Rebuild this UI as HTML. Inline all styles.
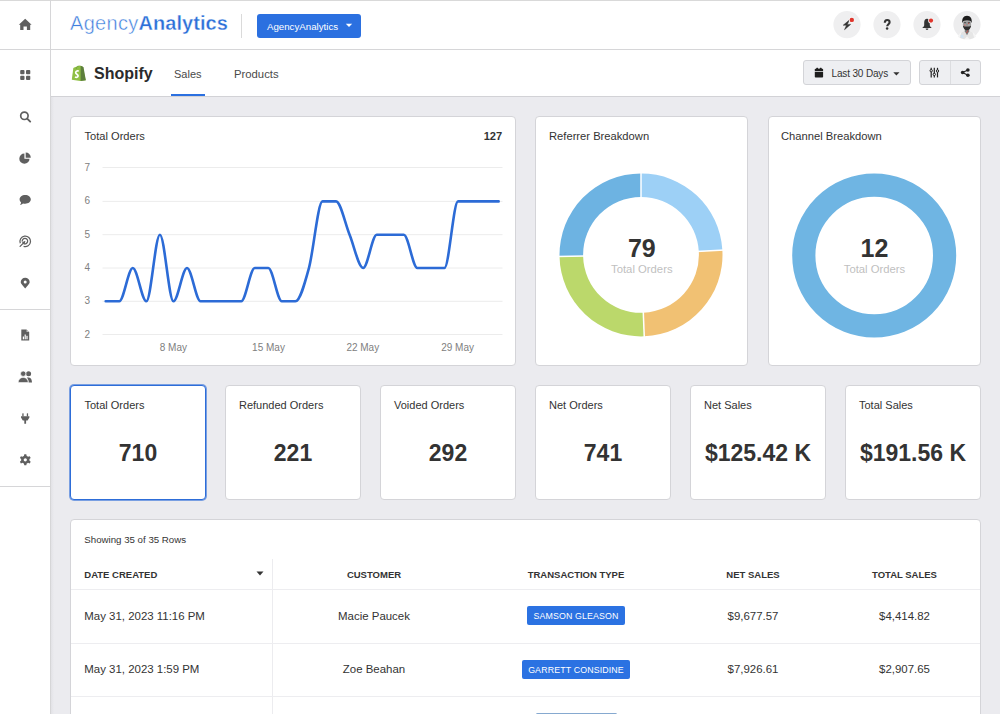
<!DOCTYPE html>
<html><head><meta charset="utf-8">
<style>
*{box-sizing:border-box;margin:0;padding:0}
html,body{width:1000px;height:714px;overflow:hidden}
body{background:#ebebef;font-family:"Liberation Sans",sans-serif;color:#333;position:relative}
.abs{position:absolute}
#topline{position:absolute;left:0;top:0;width:1000px;height:1px;background:#d9d9d9}
#sidebar{position:absolute;left:0;top:1px;width:50px;height:713px;background:#fff}
#sbborder{position:absolute;left:50px;top:0;width:1px;height:714px;background:#d6d6d8}
#sbshadow{position:absolute;left:51px;top:97px;width:3px;height:617px;background:linear-gradient(to right,#e2e2e6,#ebebef)}
#header{position:absolute;left:51px;top:1px;width:949px;height:48px;background:#fff}
#hline{position:absolute;left:0;top:49px;width:1000px;height:1px;background:#d6d6d8}
#subnav{position:absolute;left:51px;top:50px;width:949px;height:46px;background:#fff}
#snline{position:absolute;left:51px;top:96px;width:949px;height:1px;background:#d2d2d6}
.sbl{position:absolute;left:0;width:50px;height:1px;background:#d6d6d8}
.ico{position:absolute}
.card{position:absolute;background:#fff;border:1px solid #d4d4d8;border-radius:4px}
.t11{font-size:11px;color:#333;position:absolute;white-space:nowrap;line-height:1}
.kpi .lbl{position:absolute;left:13px;top:13.2px;font-size:11px;color:#333;white-space:nowrap;line-height:13px}
.kpi .val{position:absolute;left:0;right:0;top:54px;text-align:center;font-size:23px;font-weight:700;color:#333;line-height:26px;white-space:nowrap}
.th{position:absolute;font-size:9.5px;font-weight:700;color:#333;white-space:nowrap;line-height:1;letter-spacing:0}
.td{position:absolute;font-size:11.45px;color:#333;white-space:nowrap;line-height:1}
.badge{position:absolute;height:19px;background:#2b72e2;border-radius:2px;color:#fff;font-size:8.8px;letter-spacing:0.15px;text-align:center;line-height:20.5px;white-space:nowrap}
.rl{position:absolute;left:1px;width:909px;height:1px;background:#ededf0}
</style></head>
<body>
<div id="topline"></div>
<div id="sidebar"></div>
<div id="header"></div>
<div id="subnav"></div>
<div id="hline"></div>
<div id="snline"></div>
<div id="sbborder"></div>
<div id="sbshadow"></div>
<div class="sbl" style="top:309px"></div>
<div class="sbl" style="top:486px"></div>

<!-- HEADER -->
<div class="abs" style="left:70px;top:11px;font-size:20px;line-height:24px;white-space:nowrap;letter-spacing:-0.05px;transform:scaleY(1.05);transform-origin:0 18px"><span style="color:#3f80dd;-webkit-text-stroke:0.45px #fff;letter-spacing:0.3px">Agency</span><span style="color:#2c6fd8;font-weight:700;-webkit-text-stroke:0.35px #fff;letter-spacing:0.05px">Analytics</span></div>
<div class="abs" style="left:241px;top:14px;width:1px;height:24px;background:#dadada"></div>
<div class="abs" style="left:257px;top:14px;width:104px;height:24px;background:#2b70e0;border-radius:3px;color:#fff;font-size:9.7px;line-height:25px;padding-left:10px;white-space:nowrap">AgencyAnalytics</div>

<!-- ICONS -->
<svg class="abs" style="left:0;top:0" width="1000" height="100" viewBox="0 0 1000 100">
<g fill="#5f5f5f">
<path d="M25.2,18.8L31.6,24.7H30.2V29.9H26.9V26.6H23.5V29.9H20.2V24.7H18.8Z"/>
<rect x="20.2" y="70" width="4.3" height="4.3" rx="1"/><rect x="26" y="70" width="4.3" height="4.3" rx="1"/>
<rect x="20.2" y="75.8" width="4.3" height="4.3" rx="1"/><rect x="26" y="75.8" width="4.3" height="4.3" rx="1"/>
</g>
<circle cx="847" cy="24.6" r="13.6" fill="#efeff0"/>
<circle cx="887" cy="24.6" r="13.6" fill="#efeff0"/>
<circle cx="927" cy="24.6" r="13.6" fill="#efeff0"/>
<circle cx="967" cy="24.6" r="13.6" fill="#ededee"/>
<path d="M849.3,20.1L843.2,25.2H846.5L844.5,29.7L850.6,24.4H847.3Z" fill="#333" stroke="#333" stroke-width="0.5" stroke-linejoin="round"/>
<circle cx="851.8" cy="19.9" r="3" fill="#f4f4f4"/>
<circle cx="851.8" cy="19.9" r="2.2" fill="#e0352b"/>
<path d="M884.8,22.8C884.8,21 885.9,20 887.2,20C888.6,20 889.6,20.9 889.6,22.2C889.6,24.1 887.2,24.3 887.2,26.2" fill="none" stroke="#333" stroke-width="2.1"/>
<circle cx="887.1" cy="28.4" r="1.25" fill="#333"/>
<path d="M927,18.8C925.2,18.8 924.2,20.4 924.2,22.6V25.3C924.2,26.5 923.1,27.2 922.1,28.1H931.9C930.9,27.2 929.8,26.5 929.8,25.3V22.6C929.8,20.4 928.8,18.8 927,18.8Z" fill="#333"/>
<path d="M925.6,28.6H928.4A1.4,1.4 0 0 1 925.6,28.6Z" fill="#333"/>
<circle cx="931" cy="20.6" r="2.9" fill="#f2f2f2"/>
<circle cx="931" cy="20.6" r="2.1" fill="#e0352b"/>
<g>
<path d="M957.8,36.8C958.8,33.2 961.5,31.4 965,30.8H969C972.5,31.4 975.2,33.2 976.2,36.8C973.5,38.8 970.5,39.6 967,39.6C963.5,39.6 960.5,38.8 957.8,36.8Z" fill="#f5f5f5"/>
<path d="M961.5,32.2C962.5,31.6 963.8,31.1 965,30.9L967,36.5L964.2,39.2C962.5,38.9 961,38.4 959.8,37.8Z" fill="#e2e2e2"/>
<path d="M972.5,32.2C971.5,31.6 970.2,31.1 969,30.9L967,36.5L969.8,39.2C971.5,38.9 973,38.4 974.2,37.8Z" fill="#e6e6e6"/>
<path d="M960.5,35.5L962.8,34.5L963.8,37.5L961.5,38Z" fill="#cfe3f5"/>
<path d="M964.8,28.2H969.2V31.2L967,35.5L964.8,31.2Z" fill="#7a7a7a"/>
<ellipse cx="967" cy="24.3" rx="4.1" ry="5" fill="#a4a4a4"/>
<path d="M962.9,25.4C963.3,28.5 964.8,30.2 967,30.2C969.2,30.2 970.7,28.5 971.1,25.4C970,26.4 968.8,26.6 967,26.6C965.2,26.6 964,26.4 962.9,25.4Z" fill="#2e2e2e"/>
<path d="M962.3,23.2C961.8,18.6 963.4,15.8 967,15.8C970.6,15.8 972.2,18.6 971.7,23.2C971.1,21.3 970.3,20.3 967,20.2C963.7,20.3 962.9,21.3 962.3,23.2Z" fill="#1c1c1c"/>
<rect x="963.9" y="22.3" width="2.3" height="0.9" fill="#3a3a3a"/><rect x="967.8" y="22.3" width="2.3" height="0.9" fill="#3a3a3a"/>
<rect x="966.6" y="23.5" width="0.8" height="2.2" fill="#777"/>
<circle cx="968.6" cy="23.3" r="0.55" fill="#e0352b"/><circle cx="964.9" cy="25.1" r="0.55" fill="#e0352b"/><circle cx="967.6" cy="31" r="0.6" fill="#e0352b"/><circle cx="966.8" cy="32.6" r="0.5" fill="#e0352b"/>
</g>
</svg>
<!-- SIDEBAR ICONS -->
<svg class="abs" style="left:0;top:100px" width="50" height="380" viewBox="0 100 50 380">
<g fill="#5f5f5f">
<circle cx="24.4" cy="115.8" r="3.7" fill="none" stroke="#5f5f5f" stroke-width="1.7"/>
<path d="M27.2,118.6L30.2,121.6" stroke="#5f5f5f" stroke-width="1.9" stroke-linecap="round"/>
<path d="M24.4,153.6A5.1,5.1 0 1 0 29.5,158.7H24.4Z"/>
<path d="M25.7,152.6A5.1,5.1 0 0 1 30.8,157.7H25.7Z"/>
<path d="M25.2,194.9C28.4,194.9 30.8,196.8 30.8,199.3C30.8,201.8 28.4,203.7 25.2,203.7C24.4,203.7 23.7,203.6 23,203.4C22.2,204.2 21.1,204.8 19.9,204.9C20.6,204.1 21,203.4 21.1,202.5C20.1,201.7 19.6,200.6 19.6,199.3C19.6,196.8 22,194.9 25.2,194.9Z"/>
<path d="M23.6,246.4A5.3,5.3 0 1 0 20.3,243.3" fill="none" stroke="#5f5f5f" stroke-width="1.25"/>
<path d="M23.8,243.6A2.7,2.7 0 1 0 22.3,241.7" fill="none" stroke="#5f5f5f" stroke-width="1.25"/>
<path d="M24.6,241.9L20.1,246.4" stroke="#5f5f5f" stroke-width="1.3" stroke-linecap="round"/>
<path d="M25.4,241.1L21.9,242.3L24.2,244.6Z"/>
<path d="M25.2,288.4C23.4,286 20.7,283.8 20.7,282.2A4.5,4.5 0 0 1 29.7,282.2C29.7,283.8 27,286 25.2,288.4Z"/>
<circle cx="25.2" cy="282" r="1.5" fill="#fff"/>
<path d="M21.3,329.4H26.5L29.2,332.1V340.6H21.3Z"/>
<path d="M26.5,329.4V332.1H29.2Z" fill="#fff" opacity="0.6"/>
<rect x="22.8" y="336.5" width="1.2" height="2.8" fill="#fff"/><rect x="24.6" y="334.5" width="1.2" height="4.8" fill="#fff"/><rect x="26.4" y="335.8" width="1.2" height="3.5" fill="#fff"/>
<circle cx="28.6" cy="373.7" r="2.5"/>
<path d="M26.8,377.6C27.3,377.5 28.1,377.5 28.9,377.5C31,377.5 32,380 32,382.6H28.6C28.6,380.5 28,378.8 26.8,377.6Z"/>
<circle cx="23.2" cy="373.7" r="2.7" stroke="#fff" stroke-width="0.7"/>
<path d="M18.2,382.6C18.2,379.5 20.3,377.4 23.2,377.4C26.1,377.4 28.2,379.5 28.2,382.6Z" stroke="#fff" stroke-width="0.6"/>
<rect x="22.3" y="413.2" width="1.3" height="3.2" rx="0.5"/><rect x="26.8" y="413.2" width="1.3" height="3.2" rx="0.5"/>
<path d="M21,416.2H29.4V417.6L27.6,420.6H26.1V423.8H24.3V420.6H22.8L21,417.6Z"/>
<path d="M24.3,454.3H26.3L26.7,456A3.8,3.8 0 0 1 28,456.8L29.7,456.2L30.7,457.9L29.4,459.1A3.8,3.8 0 0 1 29.4,460.6L30.7,461.7L29.7,463.4L28,462.8A3.8,3.8 0 0 1 26.7,463.6L26.3,465.2H24.3L23.9,463.6A3.8,3.8 0 0 1 22.6,462.8L20.9,463.4L19.9,461.7L21.2,460.6A3.8,3.8 0 0 1 21.2,459.1L19.9,457.9L20.9,456.2L22.6,456.8A3.8,3.8 0 0 1 23.9,456Z"/>
<circle cx="25.3" cy="459.8" r="1.6" fill="#fff"/>
</g>
</svg>
<!-- SHOPIFY LOGO -->
<svg class="abs" style="left:70px;top:64px" width="18" height="18" viewBox="0 0 18 18">
<path d="M4.2,3.4L9.6,1.5L12.5,2.4L15.8,16.2L10.3,17L1.8,15.8L3.3,4Z" fill="#8fbf45"/>
<path d="M10.6,1.8L12.5,2.4L13.6,3.6L15.8,16.2L10.6,17Z" fill="#5d7f3c"/>
<path d="M6.2,4.9C6.6,3 7.7,1.8 8.6,2.1" fill="none" stroke="#6a9a3a" stroke-width="0.8"/>
<path d="M8.7,7.2C7.9,6.7 5.9,6.8 5.7,8.5C5.5,10.3 8.2,10.3 8.1,12C8,13.4 6.4,13.6 5,12.9" fill="none" stroke="#fff" stroke-width="1.7"/>
</svg>
<!-- DATE BUTTON -->
<div class="abs" style="left:803px;top:60px;width:108px;height:25px;background:#eeeff2;border:1px solid #d3d4d8;border-radius:3px"></div>
<svg class="abs" style="left:814px;top:67px" width="10" height="11" viewBox="0 0 10 11">
<path d="M0.8,2.6Q0.8,1.8 1.6,1.8H8.3Q9.1,1.8 9.1,2.6V4.2H0.8Z" fill="#1e1e1e"/>
<path d="M0.8,5H9.1V9.8Q9.1,10.5 8.3,10.5H1.6Q0.8,10.5 0.8,9.8Z" fill="#1e1e1e"/>
<rect x="2.2" y="0.8" width="2" height="2.2" rx="0.6" fill="#1e1e1e"/><rect x="5.7" y="0.8" width="2" height="2.2" rx="0.6" fill="#1e1e1e"/>
</svg>
<div class="abs" style="left:831.5px;top:68.1px;font-size:10px;letter-spacing:-0.15px;color:#333;line-height:12px;white-space:nowrap">Last 30 Days</div>
<svg class="abs" style="left:893px;top:72px" width="7" height="4" viewBox="0 0 7 4"><path d="M0.3,0.2H6.5L3.4,3.4Z" fill="#333"/></svg>
<div class="abs" style="left:919px;top:60px;width:62px;height:25px;background:#eeeff2;border:1px solid #d3d4d8;border-radius:3px"></div>
<div class="abs" style="left:950px;top:61px;width:1px;height:23px;background:#dcdde0"></div>
<svg class="abs" style="left:928px;top:66px" width="14" height="14" viewBox="0 0 14 14">
<g stroke="#222" stroke-width="1.2" fill="#222">
<line x1="3.2" y1="1.8" x2="3.2" y2="11.4"/><line x1="6.3" y1="1.8" x2="6.3" y2="11.4"/><line x1="9.5" y1="1.8" x2="9.5" y2="11.4"/>
</g>
<g fill="#eeeff2" stroke="#222" stroke-width="1"><circle cx="3.2" cy="4.7" r="1.2"/><circle cx="6.3" cy="8.4" r="1.2"/><circle cx="9.5" cy="5" r="1.2"/></g>
</svg>
<svg class="abs" style="left:958px;top:66px" width="14" height="14" viewBox="0 0 14 14">
<g fill="#222"><circle cx="4.6" cy="6.5" r="1.8"/><circle cx="9.9" cy="4" r="1.8"/><circle cx="9.9" cy="9.3" r="1.8"/></g>
<path d="M4.6,6.5L9.9,4M4.6,6.5L9.9,9.3" stroke="#222" stroke-width="1.1"/>
</svg>
<svg class="abs" style="left:345px;top:23px" width="8" height="5" viewBox="0 0 8 5"><path d="M0.8,0.8H7.2L4,4Z" fill="#fff"/></svg>

<!-- SUBNAV -->
<div class="abs" style="left:94px;top:65px;font-size:16px;font-weight:700;color:#2b2b2b;line-height:18px;white-space:nowrap">Shopify</div>
<div class="abs" style="left:174px;top:68px;font-size:11px;color:#4a4a4a;line-height:13px">Sales</div>
<div class="abs" style="left:171px;top:93.5px;width:34px;height:2.5px;background:#2b70e0"></div>
<div class="abs" style="left:234px;top:68px;font-size:11.3px;color:#4a4a4a;line-height:13px">Products</div>

<!-- CARDS ROW 1 -->
<div class="card" style="left:70px;top:116px;width:446px;height:250px"></div>
<div class="card" style="left:535px;top:116px;width:213px;height:250px"></div>
<div class="card" style="left:768px;top:116px;width:213px;height:250px"></div>

<!-- CHARTS -->
<svg class="abs" style="left:0;top:0" width="1000" height="714" viewBox="0 0 1000 714">
<style>.ylab{font-family:"Liberation Sans";font-size:10px;fill:#808080} .xlab{font-family:"Liberation Sans";font-size:10px;fill:#808080} .ct{font-family:"Liberation Sans";font-size:11.1px;fill:#333}</style>
<text x="84.5" y="139.7" class="ct">Total Orders</text>
<text x="502.2" y="139.9" class="ct" text-anchor="end" style="font-weight:700">127</text>
<line x1="102.5" y1="167.50" x2="502.5" y2="167.50" stroke="#ececec" stroke-width="1"/>
<text x="84.6" y="170.50" class="ylab">7</text>
<line x1="102.5" y1="201.40" x2="502.5" y2="201.40" stroke="#ececec" stroke-width="1"/>
<text x="84.6" y="204.40" class="ylab">6</text>
<line x1="102.5" y1="234.70" x2="502.5" y2="234.70" stroke="#ececec" stroke-width="1"/>
<text x="84.6" y="237.70" class="ylab">5</text>
<line x1="102.5" y1="268.00" x2="502.5" y2="268.00" stroke="#ececec" stroke-width="1"/>
<text x="84.6" y="271.00" class="ylab">4</text>
<line x1="102.5" y1="301.30" x2="502.5" y2="301.30" stroke="#ececec" stroke-width="1"/>
<text x="84.6" y="304.30" class="ylab">3</text>
<line x1="102.5" y1="334.50" x2="502.5" y2="334.50" stroke="#ececec" stroke-width="1"/>
<text x="84.6" y="337.50" class="ylab">2</text>
<text x="173.4" y="350.8" class="xlab" text-anchor="middle">8 May</text>
<text x="268.5" y="350.8" class="xlab" text-anchor="middle">15 May</text>
<text x="362.8" y="350.8" class="xlab" text-anchor="middle">22 May</text>
<text x="457.6" y="350.8" class="xlab" text-anchor="middle">29 May</text>
<path d="M105.70,301.30C110.22,301.30 114.73,301.30 119.25,301.30C123.77,301.30 128.28,268.00 132.80,268.00C137.32,268.00 141.83,301.30 146.35,301.30C150.87,301.30 155.38,234.70 159.90,234.70C164.42,234.70 168.93,301.30 173.45,301.30C177.97,301.30 182.48,268.00 187.00,268.00C191.52,268.00 196.03,301.30 200.55,301.30C205.07,301.30 209.58,301.30 214.10,301.30C218.62,301.30 223.13,301.30 227.65,301.30C232.17,301.30 236.68,301.30 241.20,301.30C245.72,301.30 250.23,268.00 254.75,268.00C259.27,268.00 263.78,268.00 268.30,268.00C272.82,268.00 277.33,301.30 281.85,301.30C286.37,301.30 290.88,301.30 295.40,301.30C299.92,301.30 304.43,284.65 308.95,268.00C313.47,251.35 317.98,201.40 322.50,201.40C327.02,201.40 331.53,201.40 336.05,201.40C340.57,201.40 345.08,223.60 349.60,234.70C354.12,245.80 358.63,268.00 363.15,268.00C367.67,268.00 372.18,234.70 376.70,234.70C381.22,234.70 385.73,234.70 390.25,234.70C394.77,234.70 399.28,234.70 403.80,234.70C408.32,234.70 412.83,268.00 417.35,268.00C421.87,268.00 426.38,268.00 430.90,268.00C435.42,268.00 439.93,268.00 444.45,268.00C448.97,268.00 453.48,201.40 458.00,201.40C462.52,201.40 467.03,201.40 471.55,201.40C476.07,201.40 480.58,201.40 485.10,201.40C489.62,201.40 494.13,201.40 498.65,201.40" fill="none" stroke="#2c6bd6" stroke-width="2.6" stroke-linecap="round" stroke-linejoin="round"/>
<text x="549" y="139.7" class="ct" style="font-size:11.2px">Referrer Breakdown</text>
<path d="M641.00,173.40A81.5,81.5 0 0 1 722.36,250.04L698.80,251.45A57.9,57.9 0 0 0 641.00,197.00Z" fill="#9dd0f6"/>
<path d="M722.36,250.04A81.5,81.5 0 0 1 644.24,336.34L643.30,312.75A57.9,57.9 0 0 0 698.80,251.45Z" fill="#f1c173"/>
<path d="M644.24,336.34A81.5,81.5 0 0 1 559.52,256.52L583.11,256.05A57.9,57.9 0 0 0 643.30,312.75Z" fill="#bbd86b"/>
<path d="M559.52,256.52A81.5,81.5 0 0 1 641.00,173.40L641.00,197.00A57.9,57.9 0 0 0 583.11,256.05Z" fill="#6db3e2"/>
<line x1="641.00" y1="199.00" x2="641.00" y2="171.40" stroke="#fff" stroke-width="1.5"/>
<line x1="696.80" y1="251.57" x2="724.35" y2="249.92" stroke="#fff" stroke-width="1.5"/>
<line x1="643.22" y1="310.76" x2="644.32" y2="338.33" stroke="#fff" stroke-width="1.5"/>
<line x1="585.11" y1="256.01" x2="557.52" y2="256.56" stroke="#fff" stroke-width="1.5"/>
<text x="641.8" y="257.4" text-anchor="middle" style="font-family:'Liberation Sans';font-size:25px;font-weight:700;fill:#333">79</text>
<text x="641.8" y="273.2" text-anchor="middle" style="font-family:'Liberation Sans';font-size:11.3px;fill:#bfbfbf">Total Orders</text>
<text x="781" y="139.7" class="ct" style="font-size:11.2px">Channel Breakdown</text>
<circle cx="874.2" cy="255.5" r="70.4" fill="none" stroke="#6fb5e3" stroke-width="23.2"/>
<text x="874.5" y="256.6" text-anchor="middle" style="font-family:'Liberation Sans';font-size:25px;font-weight:700;fill:#333">12</text>
<text x="874.5" y="273.2" text-anchor="middle" style="font-family:'Liberation Sans';font-size:11.3px;fill:#bfbfbf">Total Orders</text>
</svg>
<!-- KPI -->
<div class="card kpi" style="left:70px;top:385px;width:136px;height:115px;border:1px solid #2d6dd8;box-shadow:0 0 0 1px rgba(45,109,216,0.6)"><div class="lbl" style="left:13.5px">Total Orders</div><div class="val">710</div></div>
<div class="card kpi" style="left:225px;top:385px;width:136px;height:115px"><div class="lbl">Refunded Orders</div><div class="val">221</div></div>
<div class="card kpi" style="left:380px;top:385px;width:136px;height:115px"><div class="lbl">Voided Orders</div><div class="val">292</div></div>
<div class="card kpi" style="left:535px;top:385px;width:136px;height:115px"><div class="lbl">Net Orders</div><div class="val">741</div></div>
<div class="card kpi" style="left:690px;top:385px;width:136px;height:115px"><div class="lbl">Net Sales</div><div class="val">$125.42 K</div></div>
<div class="card kpi" style="left:845px;top:385px;width:136px;height:115px"><div class="lbl">Total Sales</div><div class="val">$191.56 K</div></div>

<!-- TABLE -->
<div class="card" style="left:70px;top:519px;width:911px;height:220px"></div>

<div class="abs" style="left:84.3px;top:534px;font-size:9.7px;color:#333;line-height:11px;white-space:nowrap">Showing 35 of 35 Rows</div>
<div class="abs" style="left:272px;top:559px;width:1px;height:160px;background:#ececef"></div>
<div class="rl" style="left:71px;top:589px"></div>
<div class="rl" style="left:71px;top:643px"></div>
<div class="rl" style="left:71px;top:696px"></div>
<div class="th" style="left:84.3px;top:570px">DATE CREATED</div>
<svg class="abs" style="left:256px;top:571px" width="8" height="5" viewBox="0 0 8 5"><path d="M0.5,0.5H7.5L4,4.5Z" fill="#333"/></svg>
<div class="th" style="left:274px;width:200px;text-align:center;top:570px">CUSTOMER</div>
<div class="th" style="left:476px;width:200px;text-align:center;top:570px">TRANSACTION TYPE</div>
<div class="th" style="left:653px;width:200px;text-align:center;top:570px">NET SALES</div>
<div class="th" style="left:804.5px;width:200px;text-align:center;top:570px">TOTAL SALES</div>
<div class="td" style="left:84.3px;top:611px">May 31, 2023 11:16 PM</div>
<div class="td" style="left:274px;width:200px;text-align:center;top:611px">Macie Paucek</div>
<div class="badge" style="left:527px;top:606px;width:98px">SAMSON GLEASON</div>
<div class="td" style="left:653px;width:200px;text-align:center;top:611px">$9,677.57</div>
<div class="td" style="left:804.5px;width:200px;text-align:center;top:611px">$4,414.82</div>
<div class="td" style="left:84.3px;top:664px">May 31, 2023 1:59 PM</div>
<div class="td" style="left:274px;width:200px;text-align:center;top:664px">Zoe Beahan</div>
<div class="badge" style="left:522px;top:660px;width:108px">GARRETT CONSIDINE</div>
<div class="td" style="left:653px;width:200px;text-align:center;top:664px">$7,926.61</div>
<div class="td" style="left:804.5px;width:200px;text-align:center;top:664px">$2,907.65</div>
<div class="abs" style="left:535.5px;top:713px;width:81px;height:3px;background:#86a9d0;border-radius:2px"></div>
</body></html>
